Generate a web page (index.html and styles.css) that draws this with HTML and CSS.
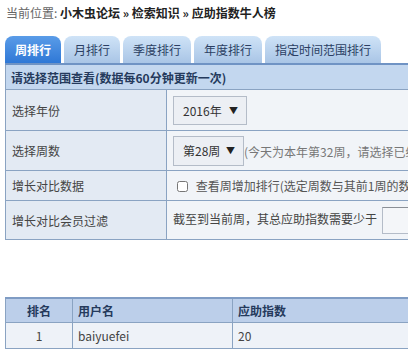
FILE: index.html
```html
<!DOCTYPE html>
<html lang="zh-CN">
<head>
  <meta charset="UTF-8">
  <meta name="viewport" content="width=device-width, initial-scale=1.0">
  <title>应助指数牛人榜</title>
  <link rel="stylesheet" href="styles.css">
</head>
<body>
  <div class="crumb">
    <span class="crumb-label">当前位置:</span>
    <b>小木虫论坛 » 检索知识 » 应助指数牛人榜</b>
  </div>

  <ul class="tabs">
    <li class="tab active">周排行</li>
    <li class="tab">月排行</li>
    <li class="tab">季度排行</li>
    <li class="tab">年度排行</li>
    <li class="tab">指定时间范围排行</li>
  </ul>

  <table class="filter">
    <thead>
      <tr>
        <th colspan="2">请选择范围查看(数据每60分钟更新一次)</th>
      </tr>
    </thead>
    <tbody>
      <tr class="row-year">
        <td class="label">选择年份</td>
        <td><span class="pick pick-year">2016年<i>▼</i></span></td>
      </tr>
      <tr class="row-week">
        <td class="label">选择周数</td>
        <td><span class="pick pick-week">第28周<i>▼</i></span><span class="hint">(今天为本年第32周，请选择已结束的周数)</span></td>
      </tr>
      <tr class="row-check">
        <td class="label">增长对比数据</td>
        <td><label class="check"><input type="checkbox"> 查看周增加排行(选定周数与其前1周的数据对比)</label></td>
      </tr>
      <tr class="row-filter">
        <td class="label">增长对比会员过滤</td>
        <td>截至到当前周，其总应助指数需要少于 <input type="text" class="limit"></td>
      </tr>
    </tbody>
  </table>

  <table class="rank">
    <thead>
      <tr>
        <th class="col-no">排名</th>
        <th class="col-user">用户名</th>
        <th>应助指数</th>
      </tr>
    </thead>
    <tbody>
      <tr>
        <td class="col-no">1</td>
        <td>baiyuefei</td>
        <td>20</td>
      </tr>
    </tbody>
  </table>
</body>
</html>
```

FILE: styles.css
```css
html, body {
  overflow: hidden;
}
body {
  margin: 0;
  padding: 3px 0 0 5px;
  font-family: "Noto Sans CJK SC", "Noto Sans", sans-serif;
  font-size: 12px;
  color: #333;
  background: #fff;
}
.crumb {
  height: 20px;
  line-height: 20px;
  padding-left: 1px;
  white-space: nowrap;
}
.crumb-label {
  color: #666;
}
.crumb b {
  color: #222;
}

/* tabs */
.tabs {
  list-style: none;
  margin: 13px 0 0;
  padding: 0;
  display: flex;
  gap: 2px;
  white-space: nowrap;
}
.tab {
  height: 27px;
  line-height: 28px;
  padding: 0 10px;
  border-radius: 8px 8px 0 0;
  background: linear-gradient(#cfe3f7, #a9c5e6);
  color: #2b3f63;
}
.tab + .tab {
  margin-left: 1px;
}
.tab.active {
  background: linear-gradient(#5a9ce8, #2f78d6);
  color: #fff;
  font-weight: bold;
}

/* filter table */
.filter {
  border-collapse: collapse;
  width: 760px;
  white-space: nowrap;
}
.filter th {
  height: 24px;
  padding: 0 0 0 5px;
  text-align: left;
  background: #c3d7ef;
  color: #253a5c;
  border: 1px solid #8aa3c2;
  border-top: 2px solid #6f93c4;
}
.filter td {
  border: 1px solid #8aa3c2;
  background: #f1f4f8;
  padding: 0 0 0 6px;
  color: #444;
}
.filter td.label {
  width: 154px;
  background: #e3eaf3;
  padding-left: 6px;
}
.row-year td { height: 40px; }
.row-week td { height: 39px; }
.row-check td { height: 29px; }
.row-filter td { height: 38px; }

.pick {
  display: inline-flex;
  align-items: center;
  justify-content: space-between;
  box-sizing: border-box;
  height: 29px;
  padding: 0 8px 0 9px;
  border: 1px solid #b4bcc8;
  background: #eceff4;
  color: #333;
  vertical-align: middle;
}
.pick i {
  font-style: normal;
  font-size: 9px;
  color: #222;
}
.pick-year { width: 74px; }
.pick-week { width: 71px; height: 30px; }
.hint {
  color: #777;
  vertical-align: middle;
}
.check {
  color: #555;
}
.check input {
  width: 11px;
  height: 11px;
  margin: 0 5px 0 4px;
  vertical-align: -1px;
}
.limit {
  box-sizing: border-box;
  width: 80px;
  height: 27px;
  margin-left: 2px;
  border: 1px solid #b4bcc8;
  border-top-color: #8a8f96;
  background: #f4f6f9;
  vertical-align: middle;
}

/* rank table */
.rank {
  margin-top: 57px;
  border-collapse: collapse;
  width: 760px;
}
.rank th,
.rank td {
  border: 1px solid #8aa3c2;
  text-align: left;
  padding: 0 0 0 5px;
}
.rank th {
  height: 23px;
  background: #bccfea;
  color: #253a5c;
  border-top: 2px solid #7f9cc4;
}
.rank td {
  height: 25px;
  background: #eef2f8;
  color: #444;
}
.rank .col-no {
  width: 66px;
  text-align: center;
  padding: 0;
}
.rank .col-user {
  width: 154px;
}
```
